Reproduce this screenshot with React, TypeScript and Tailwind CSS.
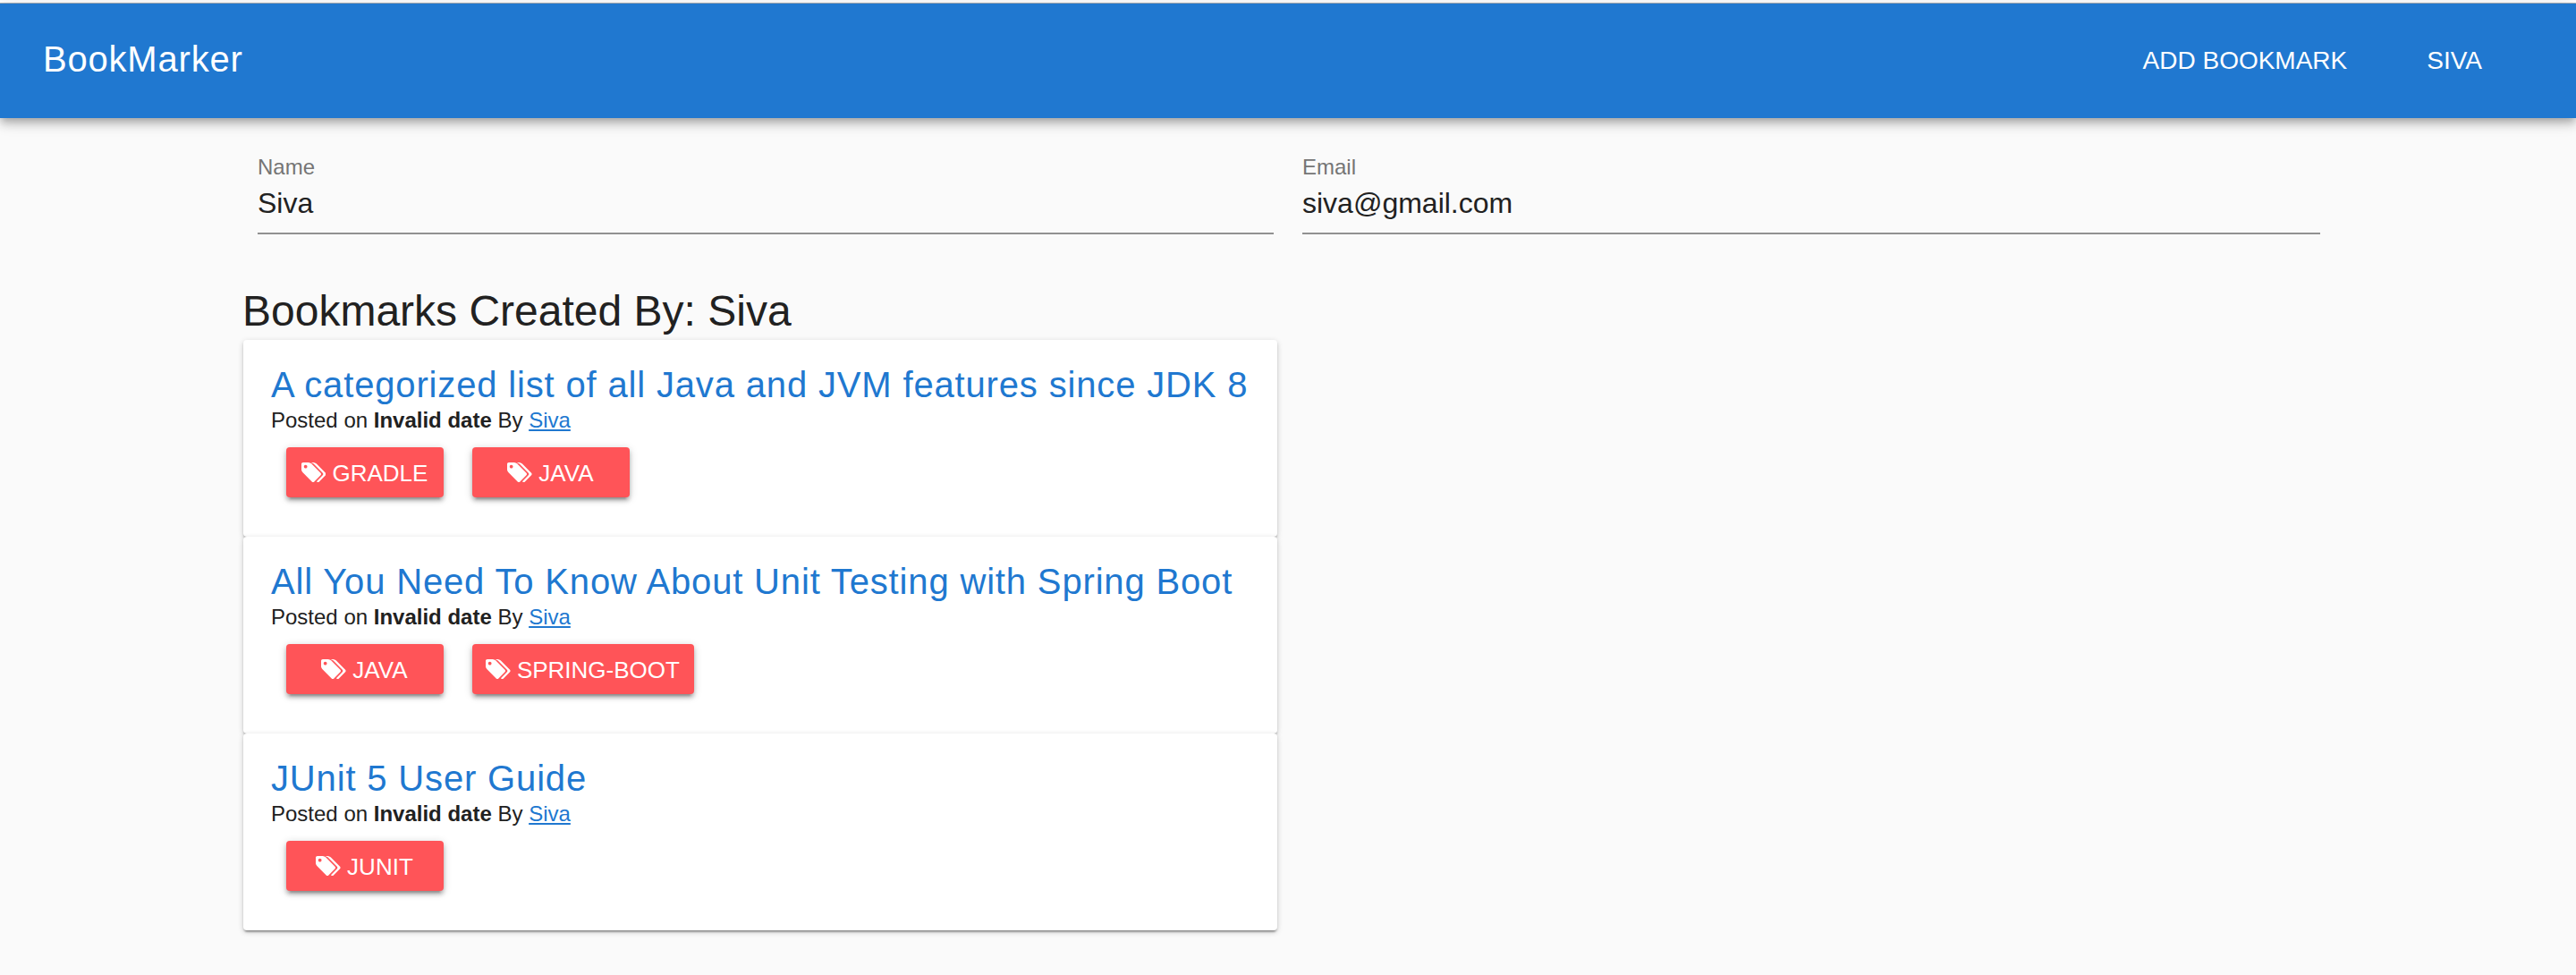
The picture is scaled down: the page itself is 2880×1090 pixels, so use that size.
const bookmarks = [
  {
    title: "A categorized list of all Java and JVM features since JDK 8",
    tags: ["Gradle", "Java"],
  },
  {
    title: "All You Need To Know About Unit Testing with Spring Boot",
    tags: ["Java", "Spring-Boot"],
  },
  { title: "JUnit 5 User Guide", tags: ["JUnit"] },
];

function TagsIcon() {
  return (
    <svg viewBox="0 -1408 1920 1536" className="h-[22.3px] w-[27.9px] shrink-0" fill="currentColor" aria-hidden="true">
      <path
        transform="scale(1 -1)"
        d="M448 1088q0 53 -37.5 90.5t-90.5 37.5t-90.5 -37.5t-37.5 -90.5t37.5 -90.5t90.5 -37.5t90.5 37.5t37.5 90.5zM1515 512q0 -53 -37 -90l-491 -492q-39 -37 -91 -37q-53 0 -90 37l-715 716q-38 37 -64.5 101t-26.5 117v416q0 52 38 90t90 38h416q53 0 117 -26.5t102 -64.5l715 -714q37 -39 37 -91zM1899 512q0 -53 -37 -90l-491 -492q-39 -37 -91 -37q-36 0 -59 14t-53 45l470 470q37 37 37 90q0 52 -37 91l-715 714q-38 38 -102 64.5t-117 26.5h224q53 0 117 -26.5t102 -64.5l715 -714q37 -39 37 -91z"
      />
    </svg>
  );
}

function Field({ label, value }: { label: string; value: string }) {
  return (
    <div className="h-[88px] border-b-2 border-[#919191]">
      <div className="mt-px h-6 text-2xl leading-6 text-[#757575]">{label}</div>
      <div className="mt-3 h-8 text-[32px] leading-8">{value}</div>
    </div>
  );
}

export default function App() {
  return (
    <div className="h-[1090px] w-[2880px] overflow-hidden bg-[#fafafa] font-['Liberation_Sans',Arial,sans-serif] text-[#212121]">
      <div className="h-1 border-b border-[#a9b0b8] bg-white" />
      <header className="flex h-32 items-center bg-[#2078d0] pr-[105px] pl-12 text-white shadow-[0_4px_8px_-2px_rgba(0,0,0,0.2),0_8px_10px_0_rgba(0,0,0,0.14),0_2px_20px_0_rgba(0,0,0,0.12)]">
        <h1 className="mb-1 grow text-[40px] leading-[64px] tracking-[0.8px]">BookMarker</h1>
        <nav className="flex gap-[89px] text-[28px] uppercase">
          <a>Add Bookmark</a>
          <a>Siva</a>
        </nav>
      </header>
      <section className="mt-[42px] ml-[288px] grid w-[2306px] grid-cols-[1136px_1fr] gap-8">
        <Field label="Name" value="Siva" />
        <Field label="Email" value="siva@gmail.com" />
      </section>
      <main className="mt-[54px] ml-[272px] w-[1156px]">
        <h2 className="-ml-px h-16 text-[48px] leading-[64px] whitespace-nowrap">Bookmarks Created By: Siva</h2>
        {bookmarks.map((b) => (
          <article
            key={b.title}
            className="h-[220px] rounded bg-white pt-[26px] pr-8 pl-[31px] shadow-[0_2px_6px_0_rgba(0,0,0,0.2),0_2px_2px_0_rgba(0,0,0,0.14),0_4px_2px_-2px_rgba(0,0,0,0.2)]"
          >
            <h3 className="h-12 text-[40px] leading-[48px] tracking-[0.84px] whitespace-nowrap text-[#2078d0]">{b.title}</h3>
            <p className="mt-0.5 h-7 text-2xl leading-7">
              Posted on <b>Invalid date</b> By <a className="text-[#2078d0] underline">Siva</a>
            </p>
            <div className="mt-4 ml-[17px] flex gap-8">
              {b.tags.map((t) => (
                <button
                  key={t}
                  className="flex h-14 min-w-[176px] items-center justify-center gap-[7px] rounded bg-[#ff5458] pr-4 pl-[15px] text-[26px] text-white uppercase shadow-[0_2px_10px_0_rgba(0,0,0,0.2),0_4px_4px_0_rgba(0,0,0,0.2),0_6px_2px_-4px_rgba(0,0,0,0.2)]"
                >
                  <TagsIcon />
                  <span className="mt-0.5">{t}</span>
                </button>
              ))}
            </div>
          </article>
        ))}
      </main>
    </div>
  );
}
